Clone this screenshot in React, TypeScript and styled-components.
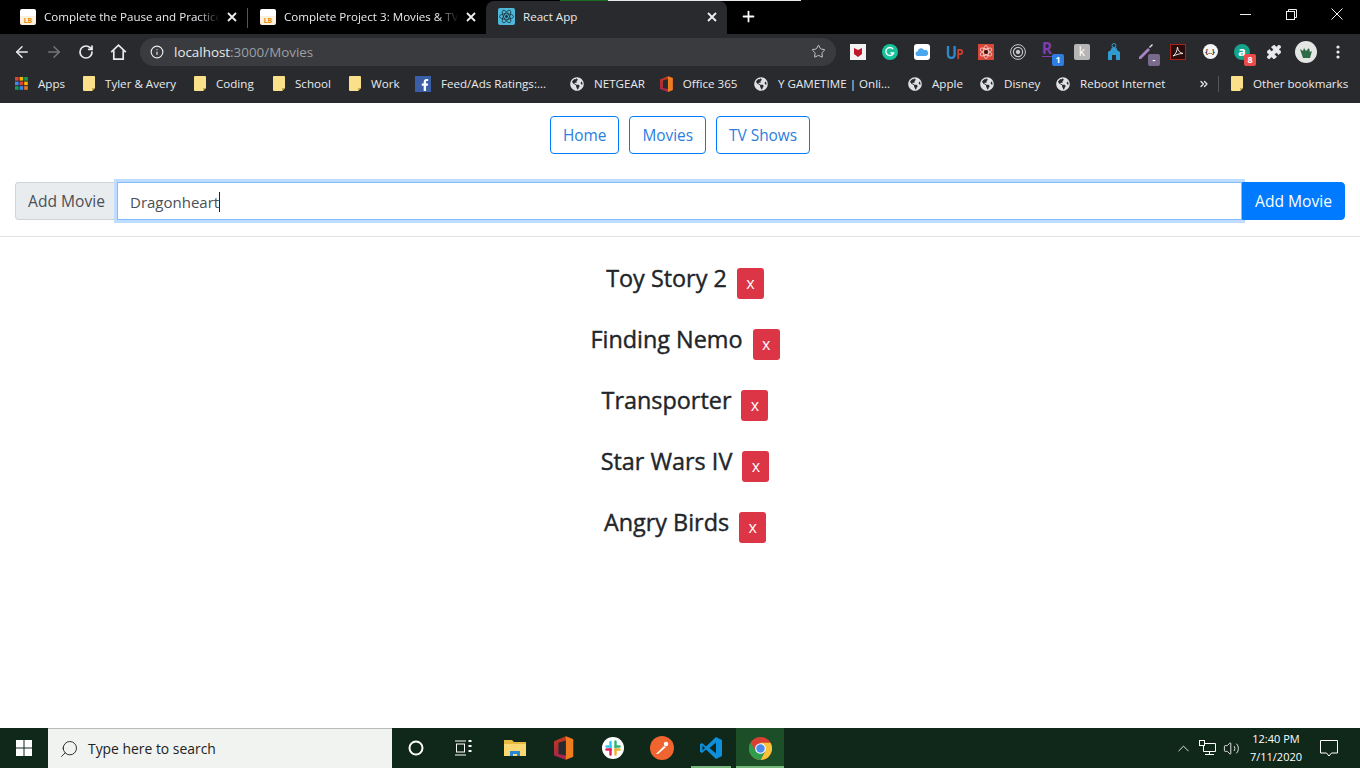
import React from 'react'
import styled, { createGlobalStyle } from 'styled-components'
import { ArrowLeft, ArrowRight, RotateCw, Info, Star, Plus, Puzzle, ChevronUp, Search, ChevronsRight, Volume2 } from 'lucide-react'
import { FaGlobeAmericas, FaFacebookF } from 'react-icons/fa'

const GlobalStyle = createGlobalStyle`
    html, body { margin: 0; padding: 0; height: 100%; overflow: hidden; background: #fff; }
    * { box-sizing: border-box; }
    body { font-family: "Open Sans", "Noto Sans", sans-serif; color: #212529; }
`

const Screen = styled.div`
    width: 1360px;
    height: 768px;
    display: flex;
    flex-direction: column;
    overflow: hidden;
`

const TabStrip = styled.div`
    position: relative;
    height: 34px;
    background: #000;
    display: flex;
    align-items: flex-end;
    padding-left: 8px;
    flex: none;
`

const LoadBar = styled.div`
    position: absolute;
    top: 0;
    left: 560px;
    width: 241px;
    height: 1px;
    background: linear-gradient(to right, #1e6b22 0 48px, #e8e8e8 48px);
`

const Tab = styled.div<{ $active?: boolean; $w: number }>`
    width: ${p => p.$w}px;
    height: 33px;
    display: flex;
    align-items: center;
    padding: 0 10px 2px 12px;
    color: #e8eaed;
    font-size: 11.6px;
    background: ${p => (p.$active ? '#292a2d' : 'transparent')};
    border-radius: 8px 8px 0 0;
    flex: none;
`

const TabDivider = styled.div`
    width: 1px;
    height: 20px;
    margin-bottom: 6px;
    background: #55565a;
    flex: none;
`

const TabTitle = styled.span<{ $fade?: boolean }>`
    flex: 1;
    margin-left: 8px;
    white-space: nowrap;
    ${p =>
        p.$fade
            ? `-webkit-mask-image: linear-gradient(to right, #000 84%, transparent 96%);
               mask-image: linear-gradient(to right, #000 84%, transparent 96%);`
            : ''}
`

const LbIcon = styled.span`
    width: 16px;
    height: 16px;
    border-radius: 2px;
    background: linear-gradient(#fff 0 45%, #fdf0dc 45%);
    color: #e08a1e;
    font-size: 7px;
    font-weight: 700;
    display: flex;
    align-items: flex-end;
    justify-content: center;
    flex: none;
`

const NewTab = styled.div`
    width: 42px;
    height: 33px;
    padding-bottom: 2px;
    display: flex;
    align-items: center;
    justify-content: center;
    color: #fff;
    flex: none;
`

const WindowControls = styled.div`
    margin-left: auto;
    height: 34px;
    display: flex;
    align-items: flex-start;
    color: #f2f2f2;
`

const WindowButton = styled.div`
    width: 46px;
    height: 28px;
    display: flex;
    align-items: center;
    justify-content: center;
`

const Toolbar = styled.div`
    height: 35px;
    background: #292a2d;
    display: flex;
    align-items: center;
    padding-left: 6px;
    flex: none;
`

const NavIcon = styled.div<{ $dim?: boolean }>`
    width: 32px;
    height: 28px;
    display: flex;
    align-items: center;
    justify-content: center;
    color: ${p => (p.$dim ? '#75777a' : '#e8eaed')};
    flex: none;
`

const Omnibox = styled.div`
    width: 696px;
    height: 28px;
    margin-left: 6px;
    margin-right: 6px;
    border-radius: 14px;
    background: #3a3b3e;
    display: flex;
    align-items: center;
    padding: 0 10px;
    color: #e8eaed;
    font-size: 13.4px;
    flex: none;
`

const UrlText = styled.span`
    margin-left: 10px;
    flex: 1;
    color: #9aa0a6;
    b { font-weight: 400; color: #e8eaed; }
`

const Extensions = styled.div`
    display: flex;
    align-items: center;
`

const Ext = styled.div`
    position: relative;
    width: 32px;
    height: 28px;
    display: flex;
    align-items: center;
    justify-content: center;
    color: #e8eaed;
    flex: none;
`

const Badge = styled.span<{ $bg: string }>`
    position: absolute;
    right: 2px;
    bottom: 0;
    min-width: 12px;
    height: 12px;
    border-radius: 2px;
    background: ${p => p.$bg};
    color: #fff;
    font-size: 9px;
    font-weight: 700;
    line-height: 12px;
    text-align: center;
`

const Bookmarks = styled.div`
    height: 34px;
    background: #292a2d;
    display: flex;
    align-items: center;
    padding: 0 0 5px 15px;
    color: #e8eaed;
    font-size: 11.6px;
    flex: none;
`

const Bookmark = styled.div<{ $w: number }>`
    width: ${p => p.$w}px;
    display: flex;
    align-items: center;
    gap: 10px;
    white-space: nowrap;
    flex: none;

    svg { flex: none; }
`

const More = styled.div`
    width: 14px;
    display: flex;
    justify-content: center;
    color: #e8eaed;
    flex: none;
`

const BarDivider = styled.div`
    width: 1px;
    height: 16px;
    margin: 0 12px 0 7px;
    background: #55565a;
    flex: none;
`

const Page = styled.main`
    flex: 1;
    background: #fff;
    display: flex;
    flex-direction: column;
    min-height: 0;
`

const Nav = styled.nav`
    display: flex;
    justify-content: center;
    gap: 10px;
    padding-top: 13px;
`

const NavButton = styled.button`
    height: 38px;
    padding: 0 12px;
    background: transparent;
    border: 1px solid #007bff;
    border-radius: 4px;
    color: #2a7ee0;
    font: inherit;
    font-size: 15.4px;
`

const InputGroup = styled.form`
    display: flex;
    height: 38px;
    margin: 28px 15px 0;
`

const Prepend = styled.div`
    width: 102px;
    display: flex;
    align-items: center;
    justify-content: center;
    background: #e9ecef;
    border: 1px solid #ced4da;
    border-right: none;
    border-radius: 4px 0 0 4px;
    color: #495057;
    font-size: 15.6px;
    flex: none;
`

const FakeInput = styled.div`
    flex: 1;
    display: flex;
    align-items: center;
    padding: 1px 12px 0;
    border: 1px solid #80bdff;
    box-shadow: 0 0 0 3px #bfdeff;
    color: #495057;
    font-size: 15px;
    position: relative;
`

const Caret = styled.span`
    width: 1px;
    height: 20px;
    background: #212529;
`

const AddButton = styled.button`
    width: 103px;
    background: #007bff;
    border: 1px solid #007bff;
    border-radius: 0 4px 4px 0;
    color: #fff;
    font: inherit;
    font-size: 15.6px;
    position: relative;
    flex: none;
`

const Rule = styled.hr`
    margin: 16px 0 0;
    border: none;
    border-top: 1px solid #e3e3e3;
`

const MovieList = styled.ul`
    list-style: none;
    margin: 0;
    padding: 27px 0 0 10px;
    display: flex;
    flex-direction: column;
    gap: 23px;
`

const MovieRow = styled.li`
    display: flex;
    align-items: center;
    justify-content: center;
    gap: 10px;
`

const MovieTitle = styled.h3`
    margin: 0 0 9px;
    font-size: 23.4px;
    font-weight: 400;
    -webkit-text-stroke: 0.4px #212529;
    line-height: 29px;
    color: #212529;
`

const DeleteButton = styled.button`
    width: 27px;
    height: 31px;
    padding: 0;
    background: #dc3545;
    border: none;
    border-radius: 3px;
    color: #fff;
    font: inherit;
    font-size: 16px;
`

const Taskbar = styled.footer`
    height: 40px;
    background: #10281a;
    display: flex;
    align-items: stretch;
    flex: none;
`

const StartButton = styled.div`
    width: 48px;
    display: flex;
    align-items: center;
    justify-content: center;
    flex: none;
`

const SearchBox = styled.div`
    width: 344px;
    display: flex;
    align-items: center;
    gap: 9px;
    padding-left: 11px;
    background: #f0f3f0;
    border-top: 1px solid #b8bdb9;
    color: #222;
    font-size: 13.9px;
    flex: none;
`

const TaskApps = styled.div`
    display: flex;
    gap: 1px;
    margin-left: 3px;
`

const TaskIcon = styled.div<{ $active?: boolean; $open?: boolean }>`
    position: relative;
    width: 48px;
    display: flex;
    align-items: center;
    justify-content: center;
    color: #fff;
    background: ${p => (p.$active ? '#1c4f28' : 'transparent')};
    flex: none;

    &::after {
        content: '';
        display: ${p => (p.$open ? 'block' : 'none')};
        position: absolute;
        bottom: 0;
        left: ${p => (p.$active ? 0 : 4)}px;
        right: ${p => (p.$active ? 0 : 4)}px;
        height: 2px;
        background: #76b67a;
    }
`

const Tray = styled.div`
    margin-left: auto;
    padding-right: 8px;
    display: flex;
    align-items: center;
    color: #fff;
`

const TrayIcon = styled.div`
    width: 24px;
    display: flex;
    justify-content: center;
`

const Clock = styled.div`
    width: 60px;
    margin-left: 3px;
    text-align: center;
    font-size: 11px;
    line-height: 18px;
`

const Notify = styled.div`
    width: 46px;
    height: 100%;
    display: flex;
    align-items: center;
    justify-content: center;
`

const ReactIcon = () => (
    <svg width="17" height="17" viewBox="0 0 17 17" style={{ flex: 'none' }}>
        <rect width="17" height="17" rx="2" fill="#4fb8d8" />
        <g fill="none" stroke="#17323d" strokeWidth="0.8">
            <ellipse cx="8.5" cy="8.5" rx="7" ry="2.8" />
            <ellipse cx="8.5" cy="8.5" rx="7" ry="2.8" transform="rotate(60 8.5 8.5)" />
            <ellipse cx="8.5" cy="8.5" rx="7" ry="2.8" transform="rotate(120 8.5 8.5)" />
        </g>
        <circle cx="8.5" cy="8.5" r="1.4" fill="#17323d" />
    </svg>
)

const CloseX = () => (
    <svg width="10" height="10" viewBox="0 0 10 10" stroke="#f0f0f0" strokeWidth="1.8">
        <path d="M1 1l8 8M9 1l-8 8" />
    </svg>
)

const HomeMark = () => (
    <svg width="17" height="16" viewBox="0 0 17 16" fill="none" stroke="#e8eaed" strokeWidth="1.7" strokeLinejoin="miter">
        <path d="M1.200 8.200L8.500 1.200l7.300 7M3.800 6.500v8.600h9.400V6.500" />
    </svg>
)

const AppsGrid = () => (
    <svg width="13" height="13" viewBox="0 0 13 13">
        {['#db4437', '#f4b400', '#0f9d58', '#4285f4', '#db4437', '#f4b400', '#0f9d58', '#4285f4', '#ea7a1c'].map((c, i) => (
            <rect key={i} x={(i % 3) * 4.6} y={Math.floor(i / 3) * 4.6} width="3.6" height="3.6" fill={c} />
        ))}
    </svg>
)

const FolderMark = () => (
    <svg width="12" height="15" viewBox="0 0 12 15">
        <path d="M1 0h10a1 1 0 0 1 1 1v11l-3 3H1a1 1 0 0 1-1-1V1a1 1 0 0 1 1-1z" fill="#fbe08b" />
        <path d="M9 15v-3h3z" fill="#c9a648" />
    </svg>
)

const FacebookMark = () => (
    <svg width="16" height="16" viewBox="0 0 16 16">
        <rect width="16" height="16" fill="#3b5ea8" />
        <foreignObject x="4" y="3" width="12" height="13">
            <FaFacebookF color="#fff" size={12} />
        </foreignObject>
    </svg>
)

const OfficeMark = ({ size = 16 }: { size?: number }) => (
    <svg width={size * 0.8} height={size} viewBox="0 0 13 16">
        <defs>
            <linearGradient id="officeLeft" x1="0" y1="0" x2="0" y2="1">
                <stop offset="0" stopColor="#c23a1c" />
                <stop offset="1" stopColor="#a3234f" />
            </linearGradient>
        </defs>
        <path d="M8 0l5 2v12l-5 2-8-3V3.500z" fill="url(#officeLeft)" />
        <path d="M8 0l5 2v12l-5 2z" fill="#ed7d1f" />
        <path d="M3 4.500L8 3v10l-5-1z" fill="#292a2d" />
    </svg>
)

const FolderTask = () => (
    <svg width="22" height="20" viewBox="0 0 22 20">
        <path d="M0 2h8l2 2h12v14H0z" fill="#e9b93f" />
        <path d="M0 6h22v12H0z" fill="#fbd872" />
        <path d="M6 18v-5h10v5h-3v-2H9v2z" fill="#2a86d6" />
    </svg>
)

const WindowsMark = () => (
    <svg width="16" height="16" viewBox="0 0 16 16" fill="#fff">
        <rect width="7.500" height="7.500" />
        <rect x="8.500" width="7.500" height="7.500" />
        <rect y="8.500" width="7.500" height="7.500" />
        <rect x="8.500" y="8.500" width="7.500" height="7.500" />
    </svg>
)

const SlackMark = () => (
    <svg width="22" height="22" viewBox="0 0 22 22" strokeWidth="2.400" strokeLinecap="round">
        <circle cx="11" cy="11" r="11" fill="#fff" />
        <path d="M8.500 5v5.500" stroke="#36c5f0" />
        <path d="M4.500 9.500h4" stroke="#36c5f0" />
        <path d="M13.500 4.500v5.500" stroke="#2eb67d" />
        <path d="M13.500 9.500h4" stroke="#2eb67d" />
        <path d="M8.500 12.500v5" stroke="#e01e5a" />
        <path d="M4.500 12.500h4" stroke="#e01e5a" />
        <path d="M13.500 12.500v5" stroke="#ecb22e" />
        <path d="M13.500 12.500h4" stroke="#ecb22e" />
    </svg>
)

const PostmanMark = () => (
    <svg width="24" height="24" viewBox="0 0 24 24">
        <circle cx="12" cy="12" r="12" fill="#f0642f" />
        <path d="M6 18l8-8 2 1-8 7z" fill="#fff" />
        <circle cx="16" cy="8" r="2.2" fill="#fff" />
    </svg>
)

const VsCodeMark = () => (
    <svg width="24" height="24" viewBox="0 0 24 24">
        <path d="M17 1l6 3v16l-6 3L7 13.6 3 17l-2-1.2V8.200L3 7l4 3.400z" fill="#0d8fdc" />
        <path d="M17 6.500L10.500 12l6.500 5.500z" fill="#10281a" />
        <path d="M3.500 9.500v5L6 12z" fill="#10281a" />
    </svg>
)

const ChromeMark = () => (
    <svg width="23" height="23" viewBox="0 0 24 24">
        <circle cx="12" cy="12" r="12" fill="#d93f32" />
        <path d="M12 24a12 12 0 0 0 10.400-18H12l5 8.600z" fill="#f6c33b" />
        <path d="M1.600 6A12 12 0 0 0 12 24l5-9.400H7z" fill="#2f9e4c" />
        <circle cx="12" cy="12" r="5.600" fill="#fff" />
        <circle cx="12" cy="12" r="4.400" fill="#4b8bf0" />
    </svg>
)

const TaskView = () => (
    <svg width="18" height="16" viewBox="0 0 18 16" fill="none" stroke="#fff" strokeWidth="1">
        <path d="M0 1h11M0 15h11" />
        <rect x="1.500" y="4" width="8" height="8" />
        <path d="M13.500 1h3M13.500 6h3M13.500 11h3" strokeWidth="2" />
    </svg>
)

const NetworkMark = () => (
    <svg width="17" height="16" viewBox="0 0 17 16" fill="none" stroke="#fff" strokeWidth="1">
        <path d="M4.500 3.500h12v8h-12zM10.500 11.500v3M6 14.500h9" />
        <rect x="0.500" y="0.500" width="5" height="5" fill="#10281a" />
    </svg>
)

const BubbleMark = () => (
    <svg width="18" height="17" viewBox="0 0 18 17" fill="none" stroke="#fff" strokeWidth="1">
        <path d="M0.500 0.500h17v12.500h-6l-2.500 3-2.500-3h-6z" />
    </svg>
)

const McAfee = () => (
    <svg width="16" height="16" viewBox="0 0 16 16">
        <rect width="16" height="16" fill="#f2f2f2" />
        <path d="M4 4l4 2 4-2v6l-4 3-4-3z" fill="#c0172c" />
    </svg>
)

const Grammarly = () => (
    <svg width="16" height="16" viewBox="0 0 16 16">
        <circle cx="8" cy="8" r="8" fill="#15c39a" />
        <path d="M11 5a4 4 0 1 0 .6 4H8.500" fill="none" stroke="#fff" strokeWidth="1.400" />
    </svg>
)

const Cloud = () => (
    <svg width="16" height="16" viewBox="0 0 16 16">
        <rect width="16" height="16" rx="3" fill="#fff" />
        <path d="M4 12a2.400 2.400 0 0 1-.3-4.800A3.400 3.400 0 0 1 10 6a2.600 2.600 0 0 1 2 6z" fill="#4aa7ee" />
    </svg>
)

const UpMark = styled.span`
    color: #2f86c9;
    font-size: 18px;
    font-weight: 700;
    letter-spacing: -1px;
    transform: scaleX(0.85);
    i { color: #c9412e; font-style: normal; font-size: 14px; }
`

const AtomMark = () => (
    <svg width="16" height="16" viewBox="0 0 16 16">
        <rect width="16" height="16" fill="#d7483b" />
        <g fill="none" stroke="#f4d6d2" strokeWidth="0.8">
            <ellipse cx="8" cy="8" rx="6.500" ry="2.600" transform="rotate(30 8 8)" />
            <ellipse cx="8" cy="8" rx="6.500" ry="2.600" transform="rotate(90 8 8)" />
            <ellipse cx="8" cy="8" rx="6.500" ry="2.600" transform="rotate(150 8 8)" />
        </g>
        <circle cx="8" cy="8" r="2" fill="#3a1512" />
    </svg>
)

const Rings = () => (
    <svg width="16" height="16" viewBox="0 0 16 16" fill="none" stroke="#c9cacb">
        <circle cx="8" cy="8" r="7.400" strokeWidth="1" />
        <circle cx="8" cy="8" r="4.600" strokeWidth="1.200" />
        <circle cx="8" cy="8" r="1.800" fill="#c9cacb" />
    </svg>
)

const LetterR = styled.span`
    color: #7e3cb0;
    font-size: 16px;
    font-weight: 700;
    margin: -6px 6px 0 0;
    border-bottom: 1px solid #7e3cb0;
    line-height: 16px;
`

const GreyK = styled.span`
    width: 16px;
    height: 16px;
    border-radius: 2px;
    background: #b5b5b5;
    color: #fff;
    font-size: 12px;
    text-align: center;
    line-height: 16px;
`

const Tag = () => (
    <svg width="12" height="17" viewBox="0 0 12 17">
        <path d="M3 7a3 3 0 0 1 6 0l3 2v8H8v-5H4v5H0V9z" fill="#2f9bd0" />
        <circle cx="6" cy="2.500" r="2" fill="none" stroke="#2f9bd0" />
    </svg>
)

const Pen = () => (
    <svg width="16" height="16" viewBox="0 0 16 16">
        <path d="M1 13l9-9 2 2-9 9H1z" fill="#a884c4" />
        <path d="M11 3l3-3 1 1-3 3z" fill="#dcdcdc" />
    </svg>
)

const Acrobat = () => (
    <svg width="16" height="16" viewBox="0 0 16 16">
        <rect x="0.500" y="0.500" width="15" height="15" fill="#2a0c0c" stroke="#a6231c" />
        <path d="M3 12c3-2 4-5 4.500-9 .5 4 2.500 6 5.500 6.500-3.500 0-6 1-10 2.500z" fill="none" stroke="#e9e9e9" strokeWidth="1" />
    </svg>
)

const Dots = styled.span`
    width: 15px;
    height: 15px;
    border-radius: 50%;
    background: #f4f4f4;
    color: #292a2d;
    font-size: 7px;
    font-weight: 700;
    text-align: center;
    line-height: 15px;
`

const AnkiMark = styled.span`
    width: 16px;
    height: 16px;
    border-radius: 50%;
    background: #14a38b;
    color: #fff;
    font-size: 13px;
    font-weight: 700;
    line-height: 14px;
    text-align: center;
`

const Avatar = () => (
    <svg width="22" height="22" viewBox="0 0 22 22">
        <circle cx="11" cy="11" r="11" fill="#e4e6e3" />
        <path d="M5 8l3 2 1-3 2 3 3-3 1 4 2-1-2 7H8z" fill="#2f6b45" />
    </svg>
)

const bookmarks = [
    { label: 'Tyler & Avery', w: 111 },
    { label: 'Coding', w: 79 },
    { label: 'School', w: 76 },
    { label: 'Work', w: 66 },
]

const sites = [
    { label: 'Apple', w: 72 },
    { label: 'Disney', w: 76 },
    { label: 'Reboot Internet', w: 141 },
]

const movies = ['Toy Story 2', 'Finding Nemo', 'Transporter', 'Star Wars IV', 'Angry Birds']

const Globe = () => <FaGlobeAmericas size={14} color="#dfe1e5" />

export default function App() {
    return (
        <Screen>
            <GlobalStyle />
            <TabStrip>
                <LoadBar />
                <Tab $w={239}>
                    <LbIcon>LB</LbIcon>
                    <TabTitle $fade>Complete the Pause and Practice</TabTitle>
                    <CloseX />
                </Tab>
                <TabDivider />
                <Tab $w={238}>
                    <LbIcon>LB</LbIcon>
                    <TabTitle $fade>Complete Project 3: Movies &amp; TV</TabTitle>
                    <CloseX />
                </Tab>
                <Tab $active $w={241}>
                    <ReactIcon />
                    <TabTitle>React App</TabTitle>
                    <CloseX />
                </Tab>
                <NewTab>
                    <Plus size={17} strokeWidth={2.5} />
                </NewTab>
                <WindowControls>
                    <WindowButton>
                        <svg width="11" height="1" viewBox="0 0 11 1" fill="#f2f2f2"><rect width="11" height="1" /></svg>
                    </WindowButton>
                    <WindowButton>
                        <svg width="11" height="11" viewBox="0 0 11 11" fill="none" stroke="#f2f2f2">
                            <path d="M2.500 2.500V.5h8v8h-2" />
                            <rect x="0.500" y="2.500" width="8" height="8" />
                        </svg>
                    </WindowButton>
                    <WindowButton>
                        <svg width="12" height="12" viewBox="0 0 12 12" stroke="#f2f2f2" strokeWidth="1">
                            <path d="M.5.5l11 11M11.500.5l-11 11" />
                        </svg>
                    </WindowButton>
                </WindowControls>
            </TabStrip>

            <Toolbar>
                <NavIcon><ArrowLeft size={18} strokeWidth={2} /></NavIcon>
                <NavIcon $dim><ArrowRight size={18} strokeWidth={2} /></NavIcon>
                <NavIcon><RotateCw size={16} strokeWidth={2.6} /></NavIcon>
                <NavIcon><HomeMark /></NavIcon>
                <Omnibox>
                    <Info size={14} strokeWidth={2} />
                    <UrlText><b>localhost</b>:3000/Movies</UrlText>
                    <Star size={15} strokeWidth={1.6} color="#c4c7c9" />
                </Omnibox>
                <Extensions>
                    <Ext><McAfee /></Ext>
                    <Ext><Grammarly /></Ext>
                    <Ext><Cloud /></Ext>
                    <Ext><UpMark>U<i>P</i></UpMark></Ext>
                    <Ext><AtomMark /></Ext>
                    <Ext><Rings /></Ext>
                    <Ext><LetterR>R</LetterR><Badge $bg="#2f7de1">1</Badge></Ext>
                    <Ext><GreyK>k</GreyK></Ext>
                    <Ext><Tag /></Ext>
                    <Ext><Pen /><Badge $bg="#7a6a8c">-</Badge></Ext>
                    <Ext><Acrobat /></Ext>
                    <Ext><Dots>{'{..}'}</Dots></Ext>
                    <Ext><AnkiMark>a</AnkiMark><Badge $bg="#ea4b4b">8</Badge></Ext>
                    <Ext><Puzzle size={16} fill="#e8eaed" strokeWidth={1} /></Ext>
                    <Ext><Avatar /></Ext>
                    <Ext>
                        <svg width="4" height="14" viewBox="0 0 4 14" fill="#e8eaed">
                            <circle cx="2" cy="2" r="1.600" />
                            <circle cx="2" cy="7" r="1.600" />
                            <circle cx="2" cy="12" r="1.600" />
                        </svg>
                    </Ext>
                </Extensions>
            </Toolbar>

            <Bookmarks>
                <Bookmark $w={68}><AppsGrid />Apps</Bookmark>
                {bookmarks.map(b => (
                    <Bookmark key={b.label} $w={b.w}><FolderMark />{b.label}</Bookmark>
                ))}
                <Bookmark $w={155}><FacebookMark />Feed/Ads Ratings:...</Bookmark>
                <Bookmark $w={90}><Globe />NETGEAR</Bookmark>
                <Bookmark $w={94}><OfficeMark />Office 365</Bookmark>
                <Bookmark $w={154}><Globe />Y GAMETIME | Onli...</Bookmark>
                {sites.map(s => (
                    <Bookmark key={s.label} $w={s.w}><Globe />{s.label}</Bookmark>
                ))}
                <More><ChevronsRight size={12} strokeWidth={2.5} /></More>
                <BarDivider />
                <Bookmark $w={118}><FolderMark />Other bookmarks</Bookmark>
            </Bookmarks>

            <Page>
                <Nav>
                    <NavButton>Home</NavButton>
                    <NavButton>Movies</NavButton>
                    <NavButton>TV Shows</NavButton>
                </Nav>
                <InputGroup>
                    <Prepend>Add Movie</Prepend>
                    <FakeInput>Dragonheart<Caret /></FakeInput>
                    <AddButton type="button">Add Movie</AddButton>
                </InputGroup>
                <Rule />
                <MovieList>
                    {movies.map(m => (
                        <MovieRow key={m}>
                            <MovieTitle>{m}</MovieTitle>
                            <DeleteButton>x</DeleteButton>
                        </MovieRow>
                    ))}
                </MovieList>
            </Page>

            <Taskbar>
                <StartButton><WindowsMark /></StartButton>
                <SearchBox>
                    <Search size={20} strokeWidth={1.1} style={{ transform: 'scaleX(-1)' }} />
                    Type here to search
                </SearchBox>
                <TaskIcon>
                    <svg width="16" height="16" viewBox="0 0 16 16" fill="none" stroke="#fff" strokeWidth="2">
                        <circle cx="8" cy="8" r="6.500" />
                    </svg>
                </TaskIcon>
                <TaskIcon><TaskView /></TaskIcon>
                <TaskApps>
                    <TaskIcon><FolderTask /></TaskIcon>
                    <TaskIcon><OfficeMark size={24} /></TaskIcon>
                    <TaskIcon><SlackMark /></TaskIcon>
                    <TaskIcon><PostmanMark /></TaskIcon>
                    <TaskIcon $open><VsCodeMark /></TaskIcon>
                    <TaskIcon $active $open><ChromeMark /></TaskIcon>
                </TaskApps>
                <Tray>
                    <TrayIcon><ChevronUp size={19} strokeWidth={1.1} /></TrayIcon>
                    <TrayIcon><NetworkMark /></TrayIcon>
                    <TrayIcon><Volume2 size={17} strokeWidth={1.2} /></TrayIcon>
                    <Clock>12:40 PM<br />7/11/2020</Clock>
                    <Notify><BubbleMark /></Notify>
                </Tray>
            </Taskbar>
        </Screen>
    )
}
